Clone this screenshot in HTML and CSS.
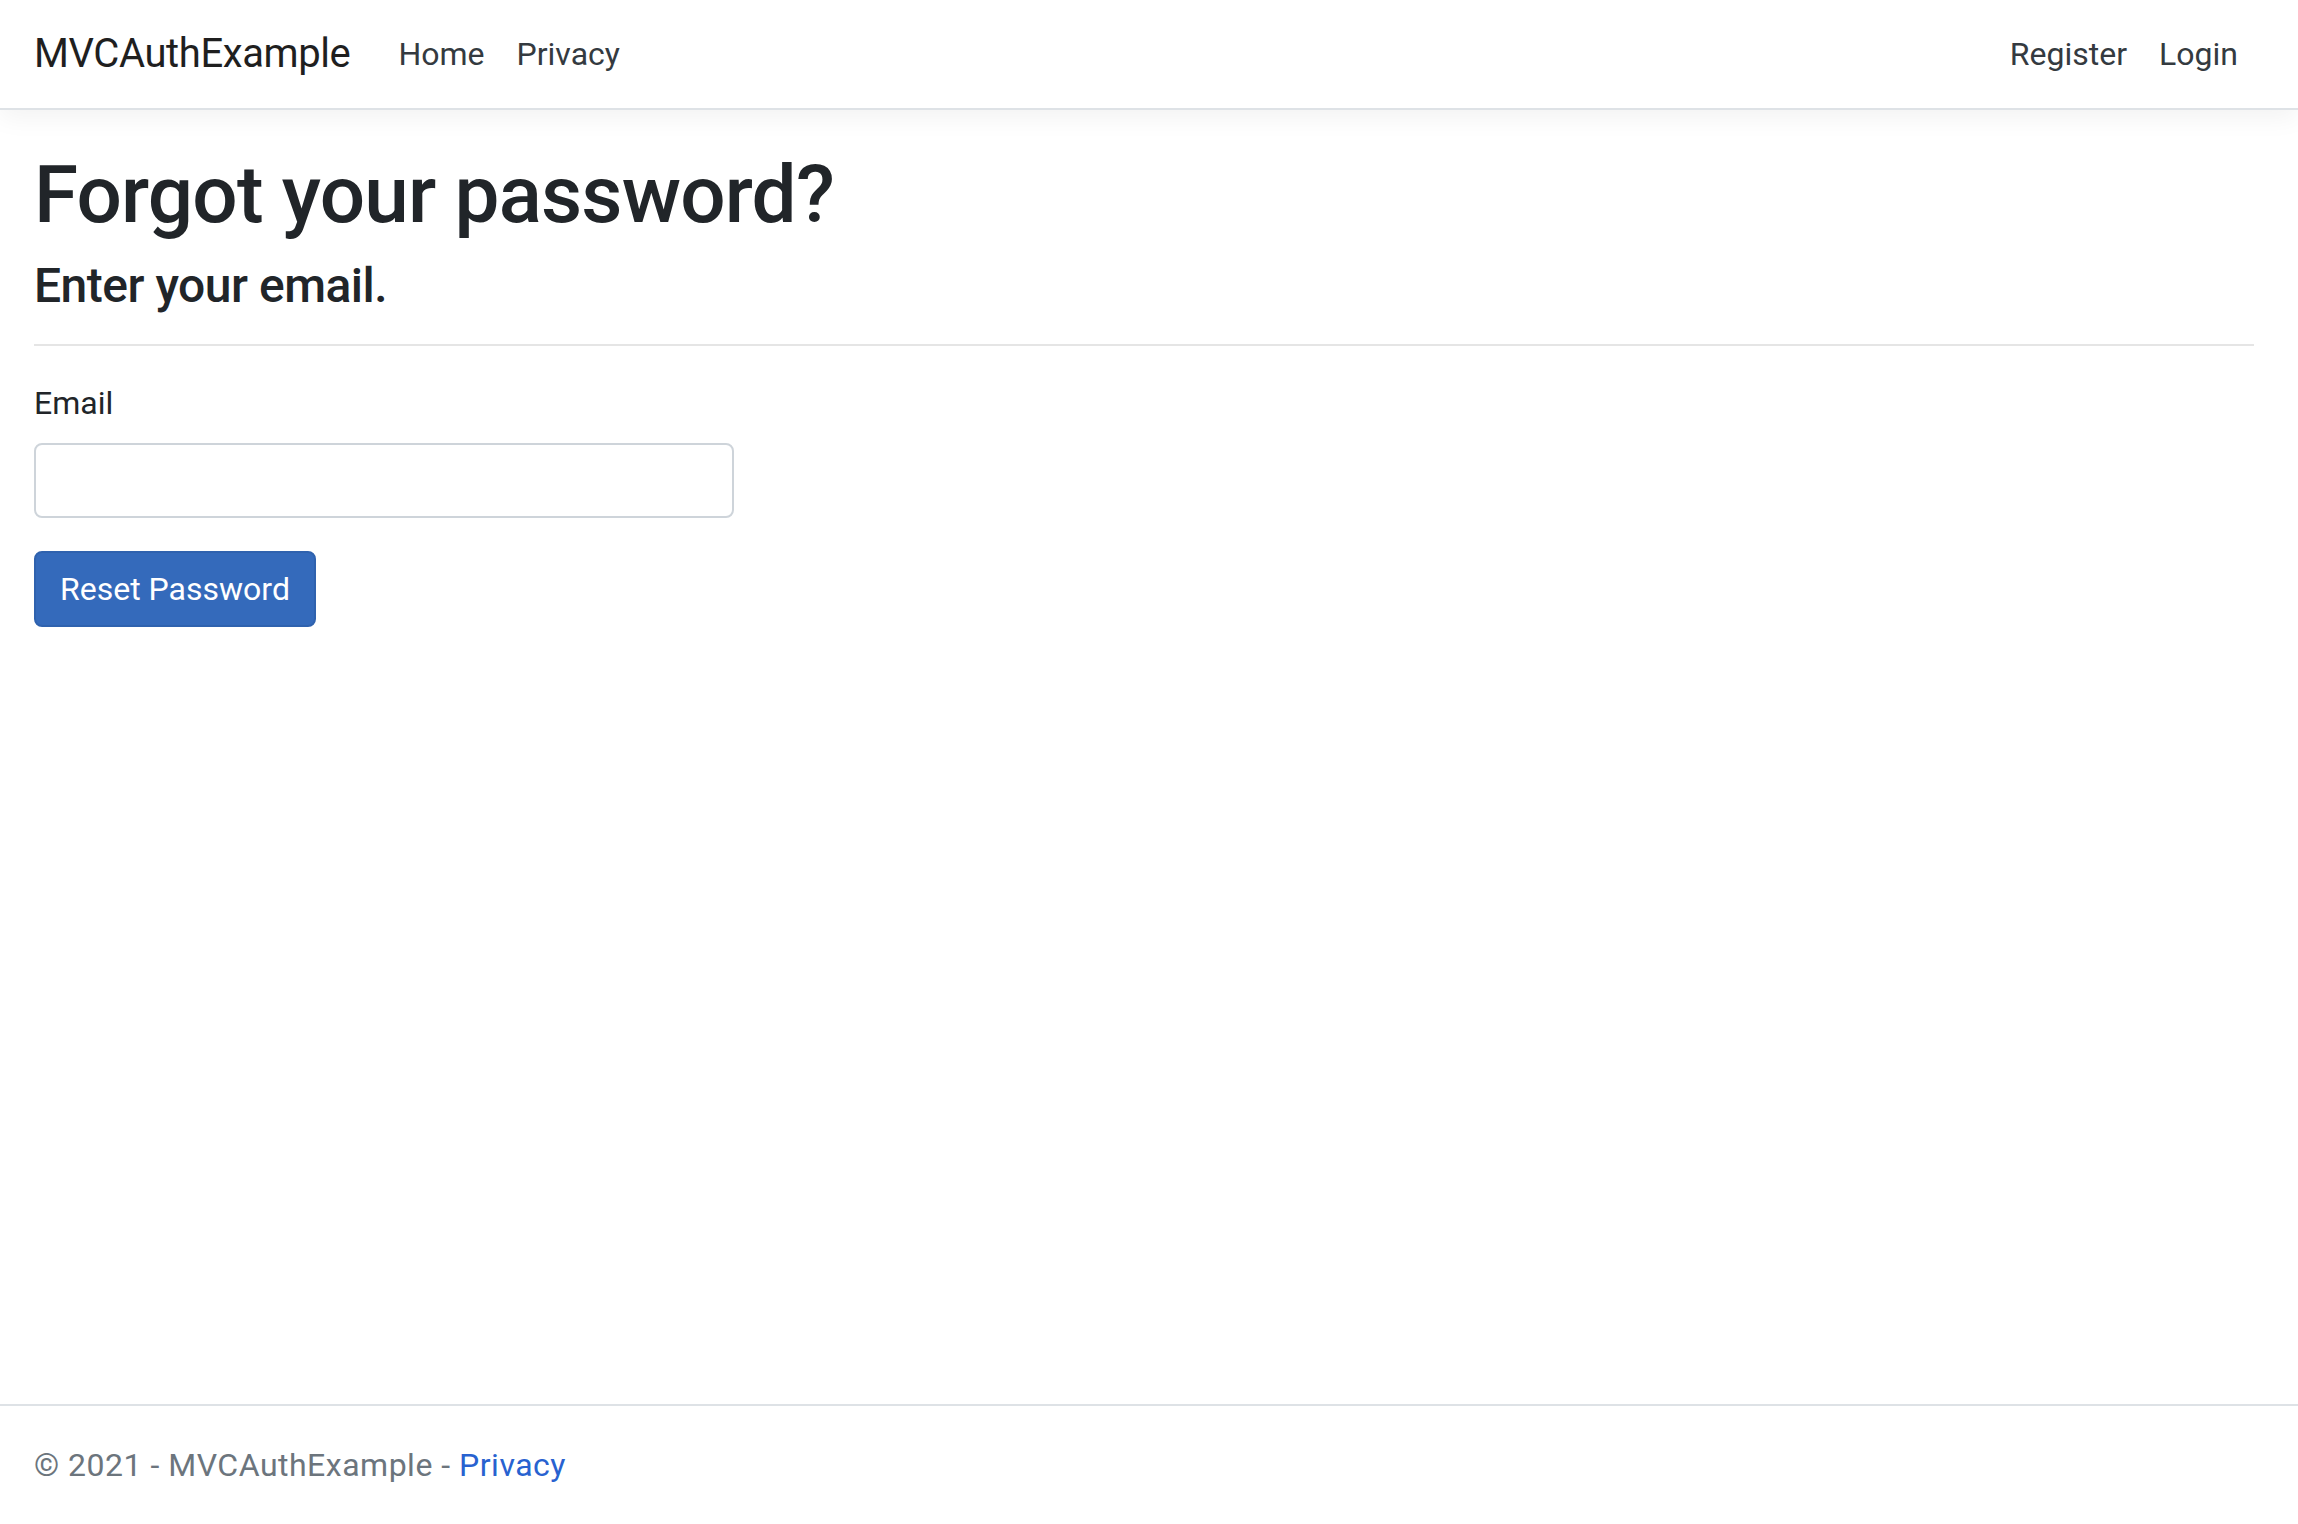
FILE: index.html
```html
<!DOCTYPE html>
<html lang="en">
<head>
<meta charset="utf-8">
<title>Forgot your password? - MVCAuthExample</title>
<link rel="stylesheet" href="styles.css">
</head>
<body>
<header class="navbar">
  <div class="nav-container">
    <a class="brand" href="#">MVCAuthExample</a>
    <ul class="nav-main">
      <li><a class="nav-link" href="#">Home</a></li>
      <li><a class="nav-link" href="#">Privacy</a></li>
    </ul>
    <ul class="nav-right">
      <li><a class="nav-link" href="#">Register</a></li>
      <li><a class="nav-link" href="#">Login</a></li>
    </ul>
  </div>
</header>
<main class="main">
  <h1 class="title">Forgot your password?</h1>
  <h4 class="subtitle">Enter your email.</h4>
  <hr class="divider">
  <form class="form">
    <div class="form-group">
      <label class="label" for="email">Email</label>
      <input class="input" id="email" type="email">
    </div>
    <button type="button" class="btn">Reset Password</button>
  </form>
</main>
<footer class="footer">
  <div class="footer-inner">&copy; 2021 - MVCAuthExample - <a class="footer-link" href="#">Privacy</a></div>
</footer>
</body>
</html>
```
FILE: styles.css
```css
* { box-sizing: border-box; }
html, body { margin: 0; padding: 0; }
body {
  font-family: Roboto, "Liberation Sans", Arial, sans-serif;
  font-size: 32px;
  line-height: 1.5;
  color: #212529;
  background: #fff;
  min-height: 100vh;
  display: flex;
  flex-direction: column;
}
a { text-decoration: none; }

.navbar {
  height: 110px;
  border-bottom: 2px solid #dee2e6;
  box-shadow: 0 8px 24px rgba(0, 0, 0, 0.05);
  background: #fff;
  position: relative;
  z-index: 1;
}
.nav-container {
  height: 108px;
  padding: 0 44px 0 34px;
  display: flex;
  align-items: center;
}
.brand {
  font-size: 40px;
  color: #1f1f1f;
  margin-right: 32px;
  line-height: 60px;
  letter-spacing: -0.4px;
}
.nav-main, .nav-right {
  list-style: none;
  margin: 0;
  padding: 0;
  display: flex;
}
.nav-right { margin-left: auto; }
.nav-link {
  display: block;
  padding: 16px;
  color: #343a40;
  font-size: 32px;
  line-height: 48px;
}

.main {
  flex: 1;
  padding: 33px 44px 32px 34px;
}
.title {
  margin: 0 0 14px;
  padding-top: 4px;
  font-size: 80px;
  font-weight: 500;
  line-height: 1.2;
  color: #212529;
  letter-spacing: -0.8px;
}
.subtitle {
  margin: 0 0 16px;
  font-size: 48px;
  font-weight: 500;
  line-height: 1.2;
  color: #212529;
  letter-spacing: -0.5px;
}
.divider {
  margin: 29px 0 33px;
  border: 0;
  border-top: 2px solid #e5e5e5;
  height: 0;
}
.form { width: 700px; }
.form-group { margin-bottom: 33px; }
.label {
  display: block;
  margin-bottom: 16px;
  line-height: 48px;
  color: #212529;
}
.input {
  display: block;
  width: 100%;
  height: 75px;
  border: 2px solid #ced4da;
  border-radius: 8px;
  background: #fff;
  font-size: 32px;
  padding: 12px 24px;
}
.btn {
  display: inline-block;
  font-family: inherit;
  font-size: 32px;
  line-height: 48px;
  padding: 12px 24px;
  height: 76px;
  color: #fff;
  background: #346abb;
  border: 2px solid #2f62ae;
  border-radius: 8px;
}

.footer {
  border-top: 2px solid #dee2e6;
  height: 120px;
  line-height: 118px;
  color: #6c757d;
  white-space: nowrap;
  letter-spacing: 0.5px;
}
.footer-inner { padding-left: 34px; }
.footer-link { color: #2862d0; }
```
